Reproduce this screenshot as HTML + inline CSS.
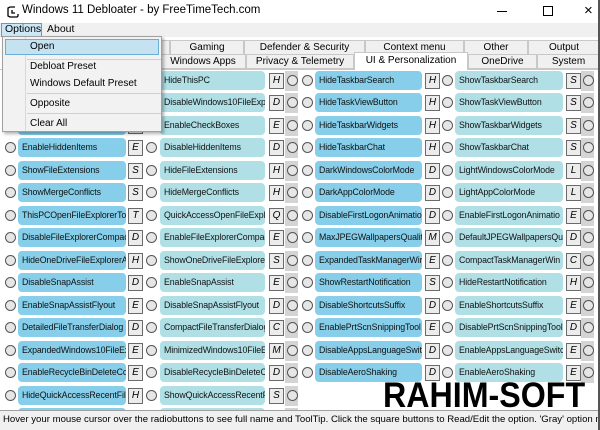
<!DOCTYPE html>
<html><head><meta charset="utf-8"><style>
*{margin:0;padding:0;box-sizing:border-box}
body{width:600px;height:430px;overflow:hidden;background:#fff;font-family:"Liberation Sans",sans-serif;position:relative}
.abs{position:absolute}
#title{left:0;top:0;width:600px;height:23px;background:#fff;font-size:11.5px}
#menubar{left:0;top:23px;width:600px;height:14px;background:#f0f0f0;font-size:10.5px}
.tab{position:absolute;height:15px;border:1px solid #c8c8c8;background:#f0f0f0;font-size:10px;text-align:center;line-height:13px;color:#000}
.row{position:absolute;left:0;width:600px;height:20px}
.row>*{position:absolute}
.rd{width:11px;height:11px;border:1px solid #555;border-radius:50%;background:#e6e6e6;top:4px}
.bx{height:19px;top:0;border-radius:4px;font-size:8.8px;line-height:19px;padding-left:4px;white-space:nowrap;overflow:hidden;color:#111;letter-spacing:-0.1px}
.dk{background:#86cee9}.lt{background:#b0e0e6}
.k{width:15px;height:16px;top:2px;border:1px solid #6a6a6a;background:#ececec;font-size:10px;text-align:center;line-height:14px}
.g{width:13px;height:20px;top:0;background:#d4d4d4}
.c1{left:18px;width:108px}.c2{left:160px;width:105px}.c3{left:315px;width:107px}.c4{left:455px;width:108px}
</style></head><body>
<div id="title" class="abs">
<svg class="abs" style="left:7px;top:5px" width="12" height="13" viewBox="0 0 12 13"><path d="M3 2 L1 3 V11 L3 12 H10 L11 11 V9 M3 2 H8 M5 5 V8 H8" fill="none" stroke="#000" stroke-width="1.3"/></svg>
<span class="abs" style="left:22px;top:4px">Windows 11 Debloater - by FreeTimeTech.com</span>
<div class="abs" style="left:497px;top:11px;width:10px;height:1px;background:#000"></div>
<div class="abs" style="left:543px;top:6px;width:10px;height:10px;border:1px solid #000"></div>
<span class="abs" style="left:584px;top:2px;font-size:15px">×</span>
</div>
<div id="menubar" class="abs">
<div class="abs" style="left:1px;top:0;width:41px;height:14px;background:#cce8f7;border:1px solid #5b9bd5"></div>
<span class="abs" style="left:5px;top:0">Options</span>
<span class="abs" style="left:47px;top:0">About</span>
</div>
<div class="abs" style="left:0;top:37px;width:600px;height:33px;background:#fff"></div>
<div class="tab" style="left:2px;top:40px;width:168px"></div>
<div class="tab" style="left:170px;top:40px;width:74px">Gaming</div>
<div class="tab" style="left:244px;top:40px;width:121px">Defender &amp; Security</div>
<div class="tab" style="left:365px;top:40px;width:99px">Context menu</div>
<div class="tab" style="left:464px;top:40px;width:64px">Other</div>
<div class="tab" style="left:528px;top:40px;width:72px">Output</div>
<div class="tab" style="left:2px;top:54px;width:158px"></div>
<div class="tab" style="left:160px;top:54px;width:86px">Windows Apps</div>
<div class="tab" style="left:246px;top:54px;width:108px">Privacy &amp; Telemetry</div>
<div class="tab" style="left:354px;top:52px;width:114px;height:18px;background:#fff;border-bottom:none;line-height:15px">UI &amp; Personalization</div>
<div class="tab" style="left:468px;top:54px;width:69px">OneDrive</div>
<div class="tab" style="left:537px;top:54px;width:63px">System</div>
<div class="abs" style="left:0;top:69px;width:354px;height:1px;background:#c8c8c8"></div>
<div class="abs" style="left:468px;top:69px;width:132px;height:1px;background:#c8c8c8"></div>

<div class="row" style="top:71px"><i class="rd" style="left:5px"></i><div class="bx dk c1">EnableTaskbarIcons</div><i class="k" style="left:128px">E</i><i class="rd" style="left:146px"></i><div class="bx lt c2">HideThisPC</div><i class="k" style="left:269px">H</i><i class="g" style="left:285px"></i><i class="rd" style="left:287px"></i><i class="rd" style="left:302px"></i><div class="bx dk c3">HideTaskbarSearch</div><i class="k" style="left:425px">H</i><i class="rd" style="left:442px"></i><div class="bx lt c4">ShowTaskbarSearch</div><i class="k" style="left:566px">S</i><i class="g" style="left:581px"></i><i class="rd" style="left:583px"></i></div>
<div class="row" style="top:93px"><i class="rd" style="left:5px"></i><div class="bx dk c1">EnableWindows10FileExpl</div><i class="k" style="left:128px">E</i><i class="rd" style="left:146px"></i><div class="bx lt c2">DisableWindows10FileExpl</div><i class="k" style="left:269px">D</i><i class="g" style="left:285px"></i><i class="rd" style="left:287px"></i><i class="rd" style="left:302px"></i><div class="bx dk c3">HideTaskViewButton</div><i class="k" style="left:425px">H</i><i class="rd" style="left:442px"></i><div class="bx lt c4">ShowTaskViewButton</div><i class="k" style="left:566px">S</i><i class="g" style="left:581px"></i><i class="rd" style="left:583px"></i></div>
<div class="row" style="top:116px"><i class="rd" style="left:5px"></i><div class="bx dk c1">DisableCheckBoxes</div><i class="k" style="left:128px">D</i><i class="rd" style="left:146px"></i><div class="bx lt c2">EnableCheckBoxes</div><i class="k" style="left:269px">E</i><i class="g" style="left:285px"></i><i class="rd" style="left:287px"></i><i class="rd" style="left:302px"></i><div class="bx dk c3">HideTaskbarWidgets</div><i class="k" style="left:425px">H</i><i class="rd" style="left:442px"></i><div class="bx lt c4">ShowTaskbarWidgets</div><i class="k" style="left:566px">S</i><i class="g" style="left:581px"></i><i class="rd" style="left:583px"></i></div>
<div class="row" style="top:138px"><i class="rd" style="left:5px"></i><div class="bx dk c1">EnableHiddenItems</div><i class="k" style="left:128px">E</i><i class="rd" style="left:146px"></i><div class="bx lt c2">DisableHiddenItems</div><i class="k" style="left:269px">D</i><i class="g" style="left:285px"></i><i class="rd" style="left:287px"></i><i class="rd" style="left:302px"></i><div class="bx dk c3">HideTaskbarChat</div><i class="k" style="left:425px">H</i><i class="rd" style="left:442px"></i><div class="bx lt c4">ShowTaskbarChat</div><i class="k" style="left:566px">S</i><i class="g" style="left:581px"></i><i class="rd" style="left:583px"></i></div>
<div class="row" style="top:161px"><i class="rd" style="left:5px"></i><div class="bx dk c1">ShowFileExtensions</div><i class="k" style="left:128px">S</i><i class="rd" style="left:146px"></i><div class="bx lt c2">HideFileExtensions</div><i class="k" style="left:269px">H</i><i class="g" style="left:285px"></i><i class="rd" style="left:287px"></i><i class="rd" style="left:302px"></i><div class="bx dk c3">DarkWindowsColorMode</div><i class="k" style="left:425px">D</i><i class="rd" style="left:442px"></i><div class="bx lt c4">LightWindowsColorMode</div><i class="k" style="left:566px">L</i><i class="g" style="left:581px"></i><i class="rd" style="left:583px"></i></div>
<div class="row" style="top:183px"><i class="rd" style="left:5px"></i><div class="bx dk c1">ShowMergeConflicts</div><i class="k" style="left:128px">S</i><i class="rd" style="left:146px"></i><div class="bx lt c2">HideMergeConflicts</div><i class="k" style="left:269px">H</i><i class="g" style="left:285px"></i><i class="rd" style="left:287px"></i><i class="rd" style="left:302px"></i><div class="bx dk c3">DarkAppColorMode</div><i class="k" style="left:425px">D</i><i class="rd" style="left:442px"></i><div class="bx lt c4">LightAppColorMode</div><i class="k" style="left:566px">L</i><i class="g" style="left:581px"></i><i class="rd" style="left:583px"></i></div>
<div class="row" style="top:206px"><i class="rd" style="left:5px"></i><div class="bx dk c1">ThisPCOpenFileExplorerTo</div><i class="k" style="left:128px">T</i><i class="rd" style="left:146px"></i><div class="bx lt c2">QuickAccessOpenFileExplo</div><i class="k" style="left:269px">Q</i><i class="g" style="left:285px"></i><i class="rd" style="left:287px"></i><i class="rd" style="left:302px"></i><div class="bx dk c3">DisableFirstLogonAnimatio</div><i class="k" style="left:425px">D</i><i class="rd" style="left:442px"></i><div class="bx lt c4">EnableFirstLogonAnimatio</div><i class="k" style="left:566px">E</i><i class="g" style="left:581px"></i><i class="rd" style="left:583px"></i></div>
<div class="row" style="top:228px"><i class="rd" style="left:5px"></i><div class="bx dk c1">DisableFileExplorerCompac</div><i class="k" style="left:128px">D</i><i class="rd" style="left:146px"></i><div class="bx lt c2">EnableFileExplorerCompac</div><i class="k" style="left:269px">E</i><i class="g" style="left:285px"></i><i class="rd" style="left:287px"></i><i class="rd" style="left:302px"></i><div class="bx dk c3">MaxJPEGWallpapersQuality</div><i class="k" style="left:425px">M</i><i class="rd" style="left:442px"></i><div class="bx lt c4">DefaultJPEGWallpapersQua</div><i class="k" style="left:566px">D</i><i class="g" style="left:581px"></i><i class="rd" style="left:583px"></i></div>
<div class="row" style="top:251px"><i class="rd" style="left:5px"></i><div class="bx dk c1">HideOneDriveFileExplorerA</div><i class="k" style="left:128px">H</i><i class="rd" style="left:146px"></i><div class="bx lt c2">ShowOneDriveFileExplorer</div><i class="k" style="left:269px">S</i><i class="g" style="left:285px"></i><i class="rd" style="left:287px"></i><i class="rd" style="left:302px"></i><div class="bx dk c3">ExpandedTaskManagerWir</div><i class="k" style="left:425px">E</i><i class="rd" style="left:442px"></i><div class="bx lt c4">CompactTaskManagerWin</div><i class="k" style="left:566px">C</i><i class="g" style="left:581px"></i><i class="rd" style="left:583px"></i></div>
<div class="row" style="top:273px"><i class="rd" style="left:5px"></i><div class="bx dk c1">DisableSnapAssist</div><i class="k" style="left:128px">D</i><i class="rd" style="left:146px"></i><div class="bx lt c2">EnableSnapAssist</div><i class="k" style="left:269px">E</i><i class="g" style="left:285px"></i><i class="rd" style="left:287px"></i><i class="rd" style="left:302px"></i><div class="bx dk c3">ShowRestartNotification</div><i class="k" style="left:425px">S</i><i class="rd" style="left:442px"></i><div class="bx lt c4">HideRestartNotification</div><i class="k" style="left:566px">H</i><i class="g" style="left:581px"></i><i class="rd" style="left:583px"></i></div>
<div class="row" style="top:296px"><i class="rd" style="left:5px"></i><div class="bx dk c1">EnableSnapAssistFlyout</div><i class="k" style="left:128px">E</i><i class="rd" style="left:146px"></i><div class="bx lt c2">DisableSnapAssistFlyout</div><i class="k" style="left:269px">D</i><i class="g" style="left:285px"></i><i class="rd" style="left:287px"></i><i class="rd" style="left:302px"></i><div class="bx dk c3">DisableShortcutsSuffix</div><i class="k" style="left:425px">D</i><i class="rd" style="left:442px"></i><div class="bx lt c4">EnableShortcutsSuffix</div><i class="k" style="left:566px">E</i><i class="g" style="left:581px"></i><i class="rd" style="left:583px"></i></div>
<div class="row" style="top:318px"><i class="rd" style="left:5px"></i><div class="bx dk c1">DetailedFileTransferDialog</div><i class="k" style="left:128px">D</i><i class="rd" style="left:146px"></i><div class="bx lt c2">CompactFileTransferDialog</div><i class="k" style="left:269px">C</i><i class="g" style="left:285px"></i><i class="rd" style="left:287px"></i><i class="rd" style="left:302px"></i><div class="bx dk c3">EnablePrtScnSnippingTool</div><i class="k" style="left:425px">E</i><i class="rd" style="left:442px"></i><div class="bx lt c4">DisablePrtScnSnippingTool</div><i class="k" style="left:566px">D</i><i class="g" style="left:581px"></i><i class="rd" style="left:583px"></i></div>
<div class="row" style="top:341px"><i class="rd" style="left:5px"></i><div class="bx dk c1">ExpandedWindows10FileEx</div><i class="k" style="left:128px">E</i><i class="rd" style="left:146px"></i><div class="bx lt c2">MinimizedWindows10FileE</div><i class="k" style="left:269px">M</i><i class="g" style="left:285px"></i><i class="rd" style="left:287px"></i><i class="rd" style="left:302px"></i><div class="bx dk c3">DisableAppsLanguageSwit</div><i class="k" style="left:425px">D</i><i class="rd" style="left:442px"></i><div class="bx lt c4">EnableAppsLanguageSwitc</div><i class="k" style="left:566px">E</i><i class="g" style="left:581px"></i><i class="rd" style="left:583px"></i></div>
<div class="row" style="top:363px"><i class="rd" style="left:5px"></i><div class="bx dk c1">EnableRecycleBinDeleteCo</div><i class="k" style="left:128px">E</i><i class="rd" style="left:146px"></i><div class="bx lt c2">DisableRecycleBinDeleteCo</div><i class="k" style="left:269px">D</i><i class="g" style="left:285px"></i><i class="rd" style="left:287px"></i><i class="rd" style="left:302px"></i><div class="bx dk c3">DisableAeroShaking</div><i class="k" style="left:425px">D</i><i class="rd" style="left:442px"></i><div class="bx lt c4">EnableAeroShaking</div><i class="k" style="left:566px">E</i><i class="g" style="left:581px"></i><i class="rd" style="left:583px"></i></div>
<div class="row" style="top:386px"><i class="rd" style="left:5px"></i><div class="bx dk c1">HideQuickAccessRecentFile</div><i class="k" style="left:128px">H</i><i class="rd" style="left:146px"></i><div class="bx lt c2">ShowQuickAccessRecentFi</div><i class="k" style="left:269px">S</i><i class="g" style="left:285px"></i><i class="rd" style="left:287px"></i></div>
<div class="row" style="top:408px"><i class="rd" style="left:5px"></i><div class="bx dk c1"></div><i class="k" style="left:128px"></i><i class="rd" style="left:146px"></i><div class="bx lt c2"></div><i class="k" style="left:269px"></i><i class="g" style="left:285px"></i></div>

<div class="abs" style="left:383px;top:378px;font-size:35px;font-weight:bold;color:#000;line-height:35px;transform:scaleX(0.92);transform-origin:0 0;white-space:nowrap">RAHIM-SOFT</div>

<div class="abs" style="left:0;top:410px;width:600px;height:20px;background:#f0f0f0;border-top:1px solid #a0a0a0;font-size:9.6px;line-height:18px;padding-left:3px;white-space:nowrap;overflow:hidden">Hover your mouse cursor over the radiobuttons to see full name and ToolTip. Click the square buttons to Read/Edit the option. 'Gray' option means not</div>
<div class="abs" style="left:598px;top:0;width:2px;height:430px;background:#555"></div>

<div class="abs" style="left:2px;top:36px;width:160px;height:96px;background:#f2f2f2;border:1px solid #a0a0a0;box-shadow:2px 2px 3px rgba(0,0,0,.3);font-size:10px">
<div class="abs" style="left:22px;top:0;width:1px;height:94px;background:#d8d8d8"></div>
<div class="abs" style="left:2px;top:2px;width:154px;height:16px;background:#c5e2f0;border:1px solid #6aaed6"></div>
<span class="abs" style="left:27px;top:4px">Open</span>
<div class="abs" style="left:24px;top:22px;width:134px;height:1px;background:#d0d0d0"></div>
<span class="abs" style="left:27px;top:24px">Debloat Preset</span>
<span class="abs" style="left:27px;top:41px">Windows Default Preset</span>
<div class="abs" style="left:24px;top:56px;width:134px;height:1px;background:#d0d0d0"></div>
<span class="abs" style="left:27px;top:61px">Opposite</span>
<div class="abs" style="left:24px;top:76px;width:134px;height:1px;background:#d0d0d0"></div>
<span class="abs" style="left:27px;top:81px">Clear All</span>
</div>
</body></html>
